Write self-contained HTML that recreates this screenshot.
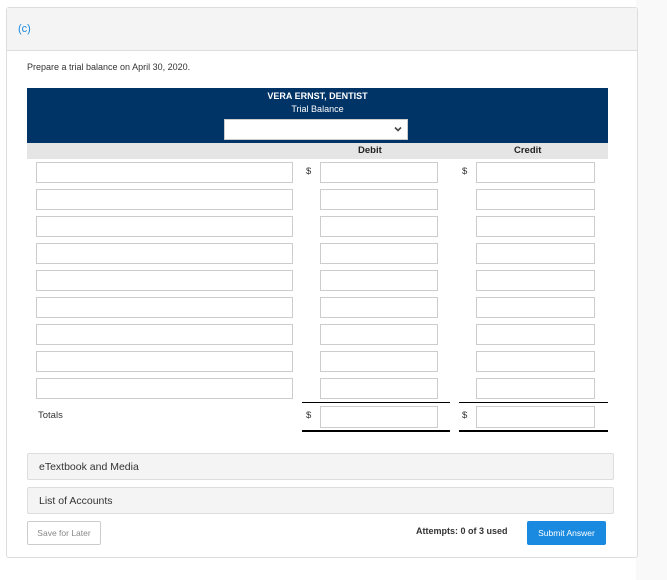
<!DOCTYPE html>
<html><head><style>
body{margin:0;width:667px;height:580px;background:#fff;font-family:"Liberation Sans",sans-serif;position:relative;overflow:hidden}
.r{position:absolute;left:636px;top:0;width:31px;height:580px;background:#f9f9f9}
.card{position:absolute;left:6px;top:7px;width:630px;height:549px;border:1px solid #ddd;border-radius:3px;background:#fff}
.hd{position:absolute;left:0;top:0;width:630px;height:42px;background:#f4f4f4;border-bottom:1px solid #ddd}
.a{position:absolute}
.in{position:absolute;height:20px;border:1px solid #ccc;background:#fff;box-sizing:border-box}
.t{font-size:9.5px;color:#333}
</style></head><body>
<div class="r"></div>
<div class="card">
<div class="hd"><span class="a" style="left:11px;top:15px;font-size:11px;color:#1a8ae0">(c)</span></div>
</div>
<div class="a t" style="left:27px;top:62px;font-size:9px">Prepare a trial balance on April 30, 2020.</div>
<div class="a" style="left:27px;top:88px;width:581px;height:55px;background:#003366"></div>
<div class="a" style="left:27px;top:91px;width:581px;text-align:center;color:#fff;font-size:9px;font-weight:bold">VERA ERNST, DENTIST</div>
<div class="a" style="left:27px;top:104px;width:581px;text-align:center;color:#fff;font-size:9px">Trial Balance</div>
<div class="a" style="left:224px;top:119px;width:184px;height:21px;background:#fff;border:1px solid #ccc;box-sizing:border-box"><svg class="a" style="right:5px;top:6px" width="8" height="6" viewBox="0 0 8 6"><path d="M1 1.5L4 4.5L7 1.5" stroke="#444" stroke-width="1.6" fill="none"/></svg></div>
<div class="a" style="left:27px;top:143px;width:581px;height:16px;background:#e5e5e5"></div>
<div class="a" style="left:358px;top:145px;font-size:9.5px;font-weight:bold;color:#222">Debit</div>
<div class="a" style="left:514px;top:145px;font-size:9.5px;font-weight:bold;color:#222">Credit</div>
<div id="rows"></div>
<div class="a" style="left:302px;top:402px;width:148px;height:1px;background:#000"></div>
<div class="a" style="left:459px;top:402px;width:149px;height:1px;background:#000"></div>
<div class="a t" style="left:38px;top:410px">Totals</div>
<div class="a t" style="left:306px;top:410px">$</div>
<div class="in" style="left:320px;top:406px;width:118px;height:22px"></div>
<div class="a t" style="left:462px;top:410px">$</div>
<div class="in" style="left:476px;top:406px;width:119px;height:22px"></div>
<div class="a" style="left:302px;top:430px;width:148px;height:2px;background:#000"></div>
<div class="a" style="left:459px;top:430px;width:149px;height:2px;background:#000"></div>
<div class="a" style="left:27px;top:453px;width:587px;height:27px;background:#f4f4f4;border:1px solid #ddd;box-sizing:border-box;border-radius:2px"><span class="a" style="left:11px;top:7px;font-size:10.5px;color:#333">eTextbook and Media</span></div>
<div class="a" style="left:27px;top:487px;width:587px;height:27px;background:#f4f4f4;border:1px solid #ddd;box-sizing:border-box;border-radius:2px"><span class="a" style="left:11px;top:7px;font-size:10.5px;color:#333">List of Accounts</span></div>
<div class="a" style="left:27px;top:521px;width:74px;height:24px;border:1px solid #ccc;box-sizing:border-box;border-radius:2px;font-size:8.5px;color:#888;text-align:center;line-height:22px">Save for Later</div>
<div class="a" style="left:416px;top:526px;font-size:9px;font-weight:bold;color:#333">Attempts: 0 of 3 used</div>
<div class="a" style="left:527px;top:521px;width:79px;height:24px;background:#1a8ae0;border-radius:2px;color:#fff;font-size:8.5px;text-align:center;line-height:24px">Submit Answer</div>
<script>
var h='';for(var i=0;i<9;i++){var y=162+i*27;
h+='<div class="in" style="left:36px;top:'+y+'px;width:257px;height:21px"></div>';
h+='<div class="in" style="left:320px;top:'+y+'px;width:118px;height:21px"></div>';
h+='<div class="in" style="left:476px;top:'+y+'px;width:119px;height:21px"></div>';
if(i==0)h+='<div class="a t" style="left:306px;top:'+(y+4)+'px">$</div><div class="a t" style="left:462px;top:'+(y+4)+'px">$</div>';}
document.getElementById('rows').innerHTML=h;
</script>
</body></html>
